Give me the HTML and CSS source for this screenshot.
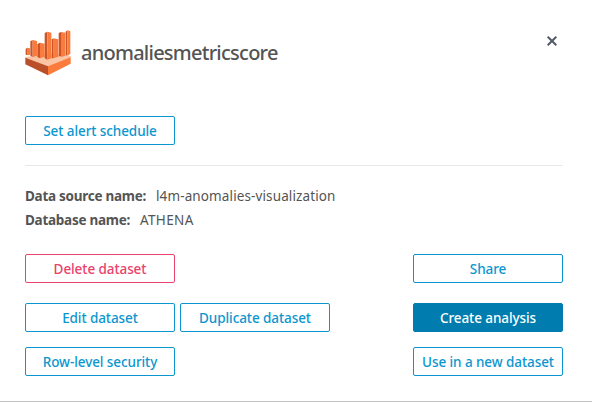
FILE: index.html
```html
<!DOCTYPE html>
<html lang="en">
<head>
<meta charset="utf-8">
<title>anomaliesmetricscore</title>
<link rel="stylesheet" href="styles.css">
</head>
<body>
<main class="dialog">
  <header class="header">
    <svg class="logo" viewBox="30 30 138 138" aria-hidden="true">
      <path fill="#fbc4a4" d="M31 112 99 98 167 108 167 114 99 141 31 116Z"/>
      <path fill="#b9502a" d="M31 113 99 139V166L31 133Z"/>
      <path fill="#fa7b3c" d="M99 139 167 112V131L99 166Z"/>
      <path fill="#c8562a" d="M32 86 38 83V106L32 104ZM46 64 53 60V111L46 107ZM67 72 75 68V115L67 111ZM89 39 97 35V119L89 115ZM110 58 116 55V115L110 115ZM131 39 138 36V109L131 109ZM152 35 157 31V107L152 106Z"/>
      <path fill="#fa7b3c" d="M38 83 45 85V104L38 106ZM53 60 66 63V107L53 111ZM75 68 89 71V110L75 115ZM97 35 109 38V115L97 119ZM116 55 130 58V110L116 115ZM138 36 151 38V107L138 111ZM157 31 166 34V102L157 107Z"/>
    </svg>
    <h1 class="title">anomaliesmetricscore</h1>
    <svg class="close" viewBox="0 0 12 12" role="img" aria-label="Close"><path d="M1.7 1.7 10.3 10.3M10.3 1.7 1.7 10.3"/></svg>
  </header>
  <button class="btn">Set alert schedule</button>
  <hr class="divider">
  <dl class="details">
    <div class="row"><dt>Data source name:</dt><dd class="source">l4m-anomalies-visualization</dd></div>
    <div class="row"><dt>Database name:</dt><dd class="database">ATHENA</dd></div>
  </dl>
  <div class="actions actions-first">
    <button class="btn danger">Delete dataset</button>
    <button class="btn end">Share</button>
  </div>
  <div class="actions">
    <button class="btn">Edit dataset</button>
    <button class="btn">Duplicate dataset</button>
    <button class="btn primary end">Create analysis</button>
  </div>
  <div class="actions">
    <button class="btn">Row-level security</button>
    <button class="btn end">Use in a new dataset</button>
  </div>
</main>
</body>
</html>
```
FILE: styles.css
```css
* { box-sizing: border-box; }
body { margin: 0; background: #fff; }
.dialog {
  width: 592px;
  height: 402px;
  padding: 30px 29px 0 25px;
  border-bottom: 1px solid #c4c4c4;
  font-family: "Noto Sans", sans-serif;
  font-size: 13.5px;
  color: #545454;
  overflow: hidden;
}
.header { display: flex; height: 86px; align-items: flex-start; }
.logo { width: 46px; height: 46px; flex: none; }
.title {
  margin: 9px 0 0 10px;
  font-size: 20px;
  line-height: 28px;
  font-weight: 500;
  letter-spacing: -0.75px;
  white-space: nowrap;
}
.close { width: 12px; height: 12px; margin: 5px 5px 0 auto; fill: none; stroke: #545b64; stroke-width: 2; }
.btn {
  display: flex;
  align-items: center;
  justify-content: center;
  flex: none;
  width: 150px;
  height: 29px;
  padding: 0;
  border: 1px solid #0c96cf;
  border-radius: 2px;
  background: #fff;
  color: #0c96cf;
  font: 500 13.5px/20px "Noto Sans", sans-serif;
  letter-spacing: -0.08px;
  white-space: nowrap;
}
.danger { color: #e9426d; border-color: #e9426d; }
.primary { color: #fff; background: #007dae; border-color: #007dae; }
.end { margin-left: auto; }
.divider { height: 1px; margin: 20px 0 18px; border: 0; background: #e8e8e8; }
.details { margin: 0 0 22px; }
.row { display: flex; height: 24px; gap: 10px; line-height: 24px; white-space: nowrap; }
.row dt { font-weight: 700; letter-spacing: -0.27px; }
.row dd { margin: 0; }
.source { letter-spacing: 0.12px; }
.database { letter-spacing: 0.35px; }
.actions { display: flex; gap: 5px; margin-bottom: 15px; }
.actions-first { margin-bottom: 20px; }
```
